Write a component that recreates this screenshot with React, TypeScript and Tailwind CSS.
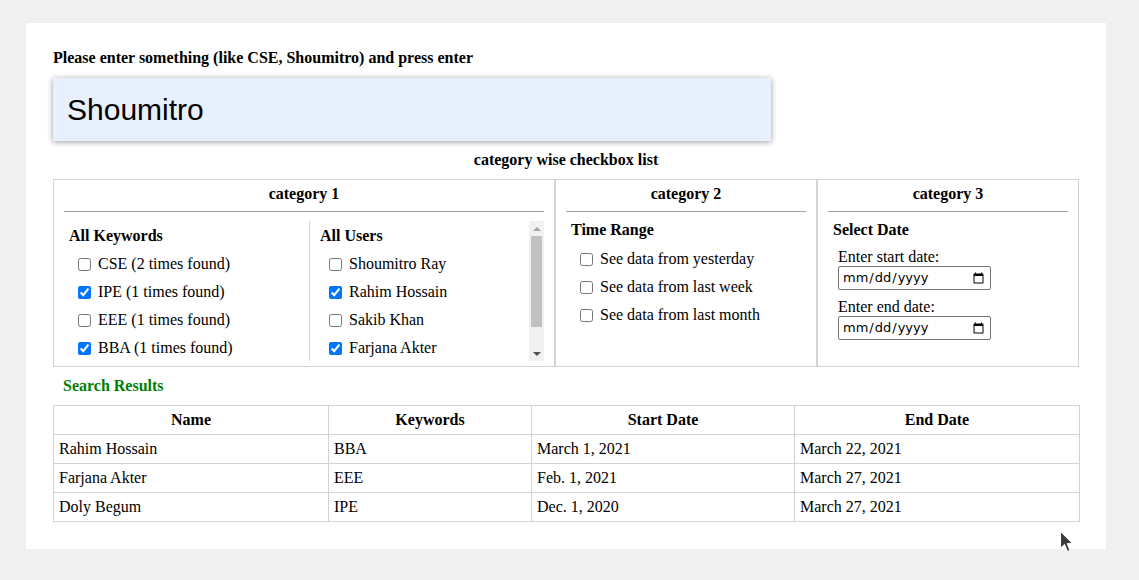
import React from 'react';

const keywords = [
  { label: 'CSE (2 times found)', checked: false },
  { label: 'IPE (1 times found)', checked: true },
  { label: 'EEE (1 times found)', checked: false },
  { label: 'BBA (1 times found)', checked: true },
];

const users = [
  { label: 'Shoumitro Ray', checked: false },
  { label: 'Rahim Hossain', checked: true },
  { label: 'Sakib Khan', checked: false },
  { label: 'Farjana Akter', checked: true },
];

const ranges = ['See data from yesterday', 'See data from last week', 'See data from last month'];

const results = [
  { name: 'Rahim Hossain', keyword: 'BBA', start: 'March 1, 2021', end: 'March 22, 2021' },
  { name: 'Farjana Akter', keyword: 'EEE', start: 'Feb. 1, 2021', end: 'March 27, 2021' },
  { name: 'Doly Begum', keyword: 'IPE', start: 'Dec. 1, 2020', end: 'March 27, 2021' },
];

const CheckRow: React.FC<{ label: string; checked?: boolean }> = ({ label, checked }) => (
  <label className="flex h-[28px] items-center gap-[7px] pl-[9px]">
    <input type="checkbox" defaultChecked={checked} className="m-0 h-[13px] w-[13px]" />
    <span>{label}</span>
  </label>
);

const CategoryCell: React.FC<{ title: string; children: React.ReactNode }> = ({ title, children }) => (
  <div className="flex flex-col border border-[#d3d3d3] pt-[4px] pb-[5px]">
    <div className="h-[20px] text-center font-bold leading-[20px]">{title}</div>
    <div className="mx-[10px] mt-[7px] h-px bg-[#a0a0a0]" />
    <div className="mx-[10px] flex-1">{children}</div>
  </div>
);

// classic scrollbar drawn as a control (headless hides native ones)
const ScrollBar: React.FC = () => (
  <div className="flex w-[15px] shrink-0 flex-col bg-[#f1f1f1]">
    <div className="flex h-[15px] items-center justify-center">
      <span className="h-0 w-0 border-x-[4px] border-b-[4px] border-x-transparent border-b-[#a3a3a3]" />
    </div>
    <div className="mx-[2px] h-[91px] bg-[#c1c1c1]" />
    <div className="flex-1" />
    <div className="flex h-[15px] items-center justify-center">
      <span className="h-0 w-0 border-x-[4px] border-t-[4px] border-x-transparent border-t-[#505050]" />
    </div>
  </div>
);

const App: React.FC = () => {
  return (
    <div className="relative min-h-screen bg-[#f0f0f0] pl-[26px] pt-[23px] font-['Liberation_Serif',serif] text-[16px] text-black">
      <div className="w-[1080px] bg-white px-[27px] pt-[26px] pb-[27px]">
        <div className="font-bold leading-[18px]">Please enter something (like CSE, Shoumitro) and press enter</div>

        <div className="mt-[11px] flex h-[63px] w-[718px] items-center bg-[#e8f0fe] pl-[14px] shadow-[0_1px_6px_rgba(0,0,0,0.4)]">
          <input
            defaultValue="Shoumitro"
            className="w-full bg-transparent font-['Liberation_Sans',Arial,sans-serif] text-[30px] text-black outline-none"
          />
        </div>

        <div className="mt-[10px] text-center font-bold leading-[18px]">category wise checkbox list</div>

        <div className="mt-[10px] grid grid-cols-[502px_262px_262px]">
          <CategoryCell title="category 1">
            <div className="mt-[9px] flex h-[140px] overflow-hidden">
              <div className="w-[245px] shrink-0 pl-[5px]">
                <div className="mt-[5px] h-[20px] font-bold leading-[20px]">All Keywords</div>
                <div className="mt-[4px]">
                  {keywords.map((k) => (
                    <CheckRow key={k.label} label={k.label} checked={k.checked} />
                  ))}
                </div>
              </div>
              <div className="flex-1 border-l border-[#d3d3d3] pl-[10px]">
                <div className="mt-[5px] h-[20px] font-bold leading-[20px]">All Users</div>
                <div className="mt-[4px]">
                  {users.map((u) => (
                    <CheckRow key={u.label} label={u.label} checked={u.checked} />
                  ))}
                </div>
              </div>
              <ScrollBar />
            </div>
          </CategoryCell>

          <CategoryCell title="category 2">
            <div className="pl-[5px]">
              <div className="mt-[8px] h-[20px] font-bold leading-[20px]">Time Range</div>
              <div className="mt-[5px]">
                {ranges.map((r) => (
                  <CheckRow key={r} label={r} />
                ))}
              </div>
            </div>
          </CategoryCell>

          <CategoryCell title="category 3">
            <div className="pl-[5px]">
              <div className="mt-[8px] h-[20px] font-bold leading-[20px]">Select Date</div>
              <div className="pl-[5px]">
                <label className="mt-[7px] block leading-[19px]">Enter start date:</label>
                <input
                  type="date"
                  className="block h-[24px] w-[153px] rounded-[2px] border border-[#767676] px-[3px] font-['DejaVu_Sans',sans-serif] text-[13px]"
                />
                <label className="mt-[7px] block leading-[19px]">Enter end date:</label>
                <input
                  type="date"
                  className="block h-[24px] w-[153px] rounded-[2px] border border-[#767676] px-[3px] font-['DejaVu_Sans',sans-serif] text-[13px]"
                />
              </div>
            </div>
          </CategoryCell>
        </div>

        <div className="mt-[10px] ml-[10px] font-bold leading-[18px] text-[#008000]">Search Results</div>

        <table className="mt-[10px] w-full table-fixed border-collapse border border-[#d3d3d3]">
          <colgroup>
            <col className="w-[275px]" />
            <col className="w-[203px]" />
            <col className="w-[263px]" />
            <col className="w-[285px]" />
          </colgroup>
          <thead>
            <tr className="h-[29px]">
              <th className="border border-[#d3d3d3] text-center font-bold">Name</th>
              <th className="border border-[#d3d3d3] text-center font-bold">Keywords</th>
              <th className="border border-[#d3d3d3] text-center font-bold">Start Date</th>
              <th className="border border-[#d3d3d3] text-center font-bold">End Date</th>
            </tr>
          </thead>
          <tbody>
            {results.map((r) => (
              <tr key={r.name} className="h-[29px]">
                <td className="border border-[#d3d3d3] px-[5px]">{r.name}</td>
                <td className="border border-[#d3d3d3] px-[5px]">{r.keyword}</td>
                <td className="border border-[#d3d3d3] px-[5px]">{r.start}</td>
                <td className="border border-[#d3d3d3] px-[5px]">{r.end}</td>
              </tr>
            ))}
          </tbody>
        </table>
      </div>

      {/* mouse pointer */}
      <svg className="absolute left-[1059px] top-[530px]" width="16" height="24" viewBox="0 0 16 24">
        <path d="M1.5 1.5 L1.5 18 L5.5 14.5 L8.5 21.5 L11 20.5 L8.2 13.6 L13.5 13.6 Z" fill="#3c3c3c" stroke="#ffffff" strokeWidth="1" />
      </svg>
    </div>
  );
};

export default App;
